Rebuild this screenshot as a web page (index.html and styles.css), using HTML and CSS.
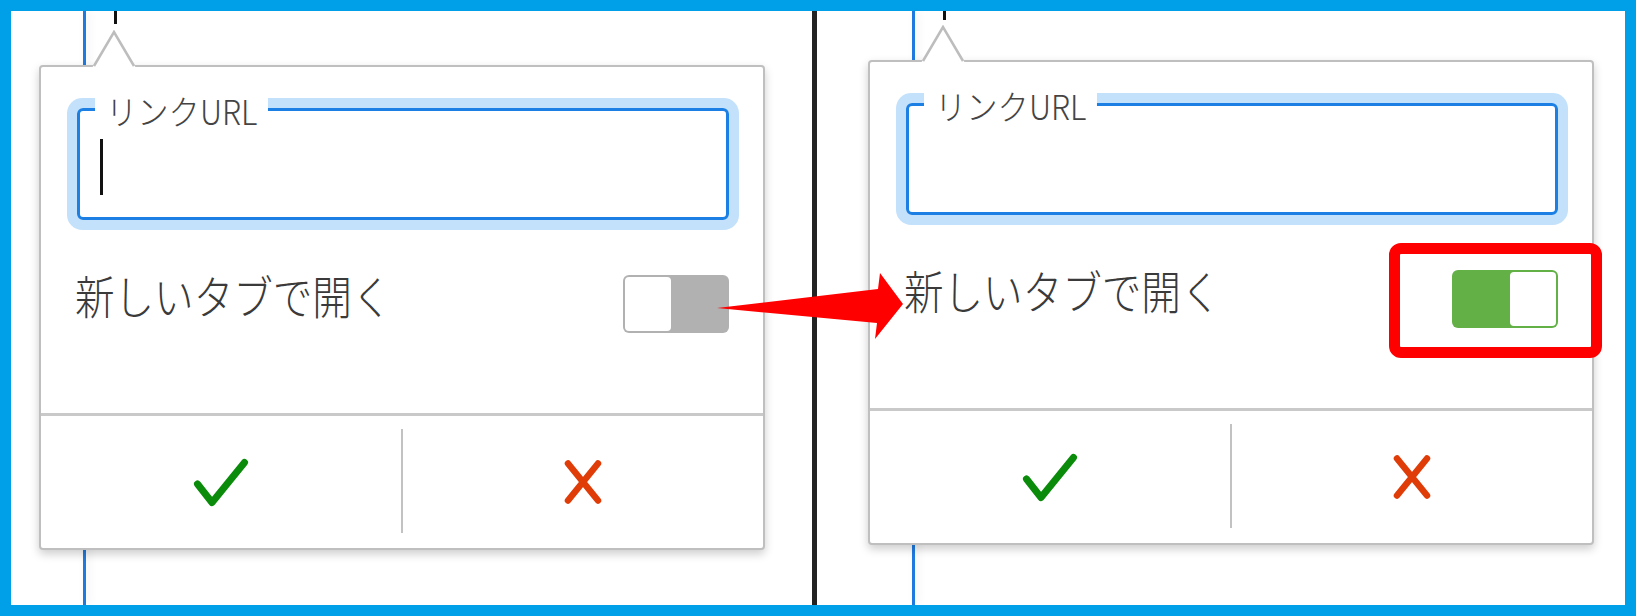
FILE: index.html
```html
<!DOCTYPE html>
<html lang="ja">
<head>
<meta charset="UTF-8" />
<meta name="viewport" content="width=device-width, initial-scale=1" />
<title>リンク設定 - 新しいタブで開く</title>
<link rel="stylesheet" href="styles.css">
</head>
<body>
<div class="frame">
  <section class="panel panel-before">
    <div class="popup">
      <svg class="popup-arrow" width="44" height="38" viewBox="0 0 44 38">
        <polygon points="0,38 22,2 44,38" fill="#fff" />
        <polyline points="2,36 22,2 42,36" fill="none" stroke="#bdbdbd" stroke-width="2.5" />
      </svg>
      <div class="url-field">
        <span class="url-label">リンクURL</span>
        <span class="text-caret"></span>
      </div>
      <div class="option-row">
        <span class="option-label">新しいタブで開く</span>
        <span class="toggle"><span class="knob"></span></span>
      </div>
      <div class="actions">
        <button class="action">
          <svg width="58" height="52" viewBox="0 0 58 52"><polyline points="5.5,28 20,46.5 52.5,6.5" fill="none" stroke="#0a8c0a" stroke-width="7" stroke-linecap="round" stroke-linejoin="round" /></svg>
        </button>
        <span class="action-sep"></span>
        <button class="action">
          <svg width="44" height="50" viewBox="0 0 44 50"><path d="M7 6.5L37 43.5M37 6.5L7 43.5" fill="none" stroke="#df3c08" stroke-width="6.5" stroke-linecap="round" /></svg>
        </button>
      </div>
    </div>
  </section>
  <div class="divider"></div>
  <section class="panel panel-after">
    <div class="popup">
      <svg class="popup-arrow" width="44" height="38" viewBox="0 0 44 38">
        <polygon points="0,38 22,2 44,38" fill="#fff" />
        <polyline points="2,36 22,2 42,36" fill="none" stroke="#bdbdbd" stroke-width="2.5" />
      </svg>
      <div class="url-field">
        <span class="url-label">リンクURL</span>
      </div>
      <div class="option-row">
        <span class="option-label">新しいタブで開く</span>
        <span class="toggle on"><span class="knob"></span></span>
      </div>
      <div class="actions">
        <button class="action">
          <svg width="58" height="52" viewBox="0 0 58 52"><polyline points="5.5,28 20,46.5 52.5,6.5" fill="none" stroke="#0a8c0a" stroke-width="7" stroke-linecap="round" stroke-linejoin="round" /></svg>
        </button>
        <span class="action-sep"></span>
        <button class="action">
          <svg width="44" height="50" viewBox="0 0 44 50"><path d="M7 6.5L37 43.5M37 6.5L7 43.5" fill="none" stroke="#df3c08" stroke-width="6.5" stroke-linecap="round" /></svg>
        </button>
      </div>
    </div>
    <span class="highlight"></span>
  </section>
  <svg class="pointer-arrow" width="186" height="66" viewBox="0 0 186 66">
    <polygon points="0,35 161,16 163,0 186,31 158,66 160,50" fill="#ff0000" />
  </svg>
</div>
</body>
</html>
```

FILE: styles.css
```css
body {
  margin: 0;
  font-family: "Noto Sans CJK JP", "Noto Sans", sans-serif;
  background: #fff;
}
.frame {
  width: 1636px;
  height: 616px;
  box-sizing: border-box;
  border: 11px solid #00a0e9;
  background: #fff;
  display: flex;
  position: relative;
}
.panel {
  position: relative;
  box-sizing: border-box;
}
.panel-before {
  width: 801px;
  padding: 54px 0 0 28px;
}
.panel-after {
  flex: 1;
  padding: 49px 0 0 51px;
}
/* editor edge behind the popup */
.panel::before {
  content: "";
  position: absolute;
  top: 0;
  bottom: 0;
  width: 3px;
  background: #1f7ae0;
  box-shadow: 3px 0 8px rgba(0,0,0,0.08);
}
.panel-before::before {
  left: 72px;
}
.panel-after::before {
  left: 95px;
}
/* caret in the editor text */
.panel::after {
  content: "";
  position: absolute;
  top: 0;
  width: 3px;
  background: #111;
}
.panel-before::after {
  left: 103px;
  height: 13px;
}
.panel-after::after {
  left: 126px;
  height: 9px;
}
.divider {
  width: 5px;
  background: #232323;
}
.popup {
  position: relative;
  z-index: 1;
  width: 726px;
  height: 485px;
  box-sizing: border-box;
  border: 2px solid #bfbfbf;
  border-radius: 4px;
  background: #fff;
  box-shadow: 0 4px 10px rgba(0,0,0,0.2);
  display: flex;
  flex-direction: column;
}
.popup-arrow {
  position: absolute;
  top: -37px;
  left: 51px;
}
.url-field {
  position: relative;
  margin: 41px 0 0 36px;
  width: 652px;
  height: 112px;
  box-sizing: border-box;
  border: 3px solid #1b7fe3;
  border-radius: 6px;
  box-shadow: 0 0 0 10px #c3e1fb;
  padding: 28px 0 0 20px;
}
.url-label {
  position: absolute;
  top: -20px;
  left: 15px;
  padding: 0 12px;
  background: #fff;
  font-size: 34px;
  font-weight: 300;
  line-height: 40px;
  color: #444;
  white-space: nowrap;
  transform: scaleX(0.92);
  transform-origin: left;
}
.text-caret {
  display: block;
  width: 3px;
  height: 56px;
  background: #111;
}
.option-row {
  display: flex;
  justify-content: space-between;
  align-items: flex-start;
  height: 58px;
  margin-top: 55px;
  padding: 0 34px;
}
.option-label {
  margin-top: -4px;
  font-size: 46px;
  font-weight: 300;
  line-height: 46px;
  color: #3a3a3a;
  white-space: nowrap;
  transform: scaleX(0.86);
  transform-origin: left;
}
.toggle {
  display: flex;
  width: 106px;
  height: 58px;
  box-sizing: border-box;
  padding: 2px;
  border-radius: 6px;
  background: #b1b1b1;
}
.toggle .knob {
  width: 46px;
  background: #fff;
  border-radius: 4px;
}
.toggle.on {
  background: #63b046;
  justify-content: flex-end;
}
.actions {
  flex: 1;
  display: flex;
  margin-top: 80px;
  border-top: 3px solid #c9c9c9;
}
.action {
  flex: 1;
  display: flex;
  align-items: center;
  justify-content: center;
  padding: 0;
  border: none;
  background: none;
  cursor: pointer;
}
.action-sep {
  width: 2px;
  margin: 13px 0 15px;
  background: #c2c2c2;
}
.highlight {
  position: absolute;
  z-index: 2;
  left: 572px;
  top: 232px;
  width: 213px;
  height: 115px;
  box-sizing: border-box;
  border: 11px solid #ff0000;
  border-radius: 12px;
}
.pointer-arrow {
  position: absolute;
  z-index: 3;
  left: 706px;
  top: 262px;
}
```
